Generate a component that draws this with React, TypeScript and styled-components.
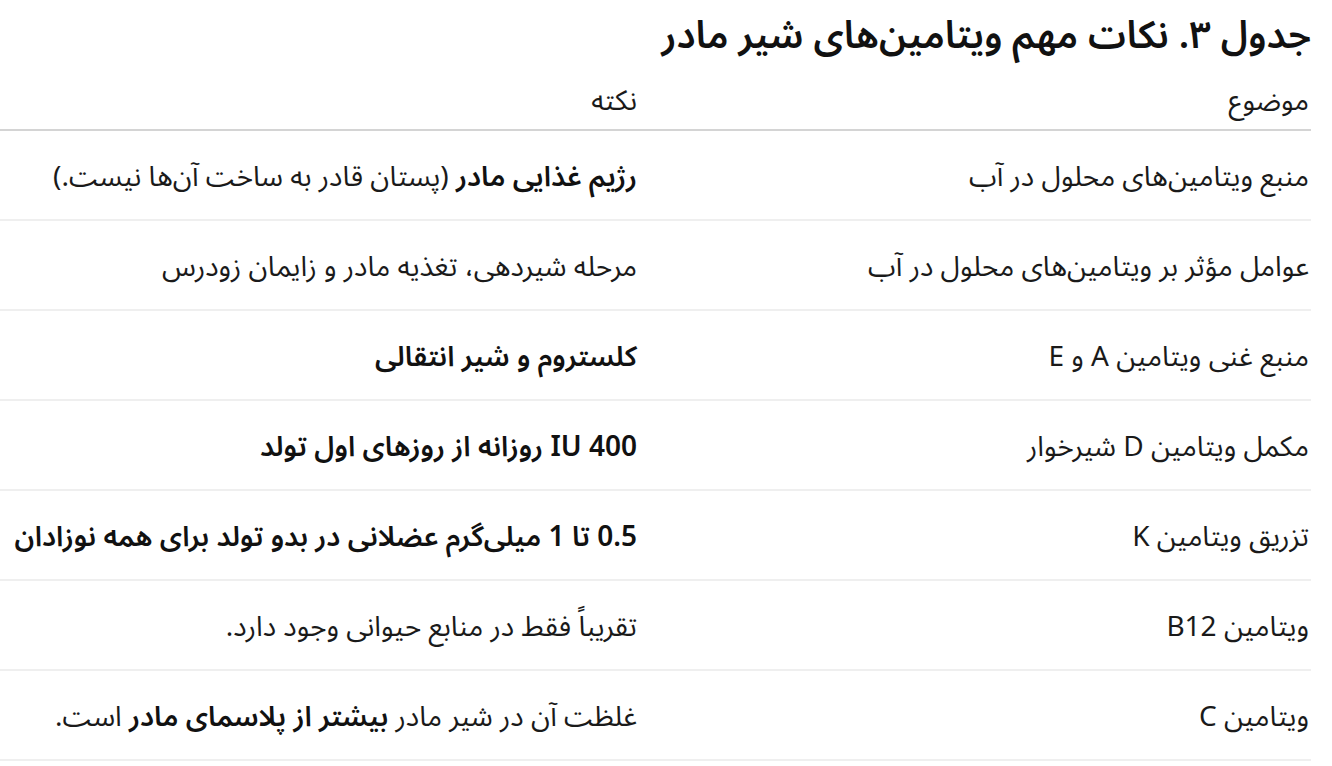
import styled, {createGlobalStyle} from "styled-components";

const GlobalStyle = createGlobalStyle`
    html, body {
        margin: 0;
        padding: 0;
        background: #ffffff;
    }
    body {
        font-family: "Noto Sans", "Noto Sans Arabic", sans-serif;
        color: #1a1a1a;
    }
`

const Page = styled.div`
    direction: rtl;
    padding: 0 21px 0 0;
`

const Title = styled.h2`
    margin: 0;
    padding: 5px 0 0;
    font-size: 38px;
    font-weight: 600;
    line-height: 56px;
    color: #111;
`

const Table = styled.table`
    width: 100%;
    border-collapse: collapse;
    table-layout: fixed;
    font-size: 28px;
`

const HeadCell = styled.th<{ $w?: number }>`
    text-align: right;
    font-weight: 400;
    line-height: 40px;
    height: 58px;
    vertical-align: bottom;
    padding: 0 2px 10px 16px;
    border-bottom: 2px solid #d4d4d4;
    width: ${props => props.$w ? `${props.$w}px` : "auto"};
`

const Row = styled.tr`
    border-bottom: 2px solid #efefef;
`

const Cell = styled.td`
    height: 88px;
    padding: 0 2px 0 16px;
    line-height: 40px;
    text-align: right;
    vertical-align: middle;
    white-space: nowrap;
    b {
        font-weight: 600;
        color: #111;
    }
`

interface IRow {
    topic: string,
    note: React.ReactNode
}

const rows: IRow[] = [
    {topic: "منبع ویتامین‌های محلول در آب", note: <><b>رژیم غذایی مادر</b> (پستان قادر به ساخت آن‌ها نیست.)</>},
    {topic: "عوامل مؤثر بر ویتامین‌های محلول در آب", note: "مرحله شیردهی، تغذیه مادر و زایمان زودرس"},
    {topic: "منبع غنی ویتامین A و E", note: <b>کلستروم و شیر انتقالی</b>},
    {topic: "مکمل ویتامین D شیرخوار", note: <b>400 IU روزانه از روزهای اول تولد</b>},
    {topic: "تزریق ویتامین K", note: <b>0.5 تا 1 میلی‌گرم عضلانی در بدو تولد برای همه نوزادان</b>},
    {topic: "ویتامین B12", note: "تقریباً فقط در منابع حیوانی وجود دارد."},
    {topic: "ویتامین C", note: <>غلظت آن در شیر مادر <b>بیشتر از پلاسمای مادر</b> است.</>},
]

const App = () => {
    return (
        <Page>
            <GlobalStyle/>
            <Title>جدول ۳. نکات مهم ویتامین‌های شیر مادر</Title>
            <Table>
                <thead>
                <tr>
                    <HeadCell $w={654}>موضوع</HeadCell>
                    <HeadCell>نکته</HeadCell>
                </tr>
                </thead>
                <tbody>
                {rows.map((r) =>
                    <Row key={r.topic}>
                        <Cell>{r.topic}</Cell>
                        <Cell>{r.note}</Cell>
                    </Row>
                )}
                </tbody>
            </Table>
        </Page>
    )
}
export default App;
